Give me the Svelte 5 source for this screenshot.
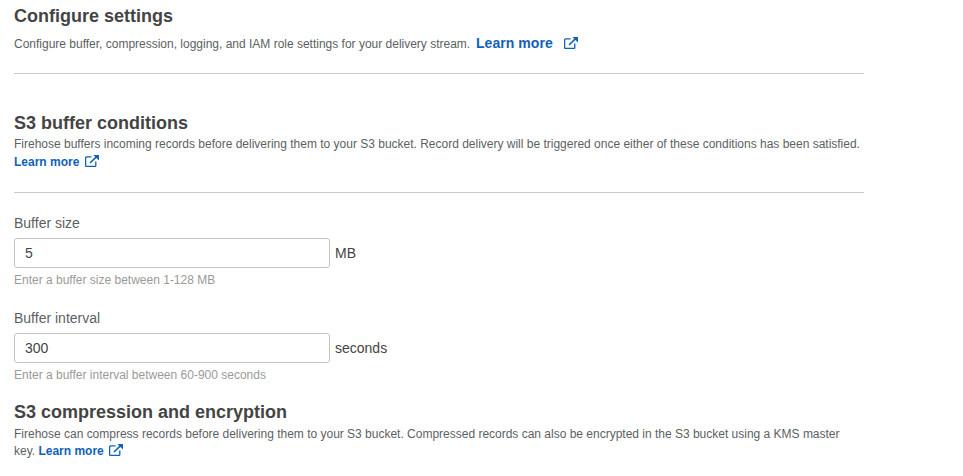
<script>
  const fields = [
    { label: 'Buffer size', value: '5', unit: 'MB', hint: 'Enter a buffer size between 1-128 MB' },
    { label: 'Buffer interval', value: '300', unit: 'seconds', hint: 'Enter a buffer interval between 60-900 seconds' }
  ]
</script>

{#snippet extIcon(cls)}
  <svg class={cls} viewBox="0 0 14 12" fill="none" stroke="currentColor" aria-hidden="true">
    <path d="M6.5 1.9H1.6a1 1 0 0 0-1 1v7.6a1 1 0 0 0 1 1h8.2a1 1 0 0 0 1-1V6.5" stroke-width="1.3" />
    <path d="M5 8L11.6 1.6" stroke-width="1.6" />
    <path d="M8.4 0H14V5.5z" fill="currentColor" stroke="none" />
  </svg>
{/snippet}

<main class="page">
  <section class="intro">
    <h2>Configure settings</h2>
    <p>Configure buffer, compression, logging, and IAM role settings for your delivery stream.
      <a class="big-link" href="#top">Learn more {@render extIcon('icon big')}</a></p>
  </section>

  <section class="buffer">
    <h3>S3 buffer conditions</h3>
    <p>Firehose buffers incoming records before delivering them to your S3 bucket. Record delivery will be triggered once either of these conditions has been satisfied.
      <a href="#top">Learn more {@render extIcon('icon')}</a></p>
  </section>

  <div class="fields">
    {#each fields as f}
      <div class="field">
        <label for={f.label}>{f.label}</label>
        <div class="row">
          <input id={f.label} type="text" value={f.value} />
          <span>{f.unit}</span>
        </div>
        <small>{f.hint}</small>
      </div>
    {/each}
  </div>

  <section class="compression">
    <h3>S3 compression and encryption</h3>
    <p>Firehose can compress records before delivering them to your S3 bucket. Compressed records can also be encrypted in the S3 bucket using a KMS master key.
      <a href="#top">Learn more {@render extIcon('icon')}</a></p>
  </section>
</main>

<style>
  :global(body) {
    background: #fff;
    overflow: hidden;
  }

  .page {
    width: 850px;
    height: 476px;
    padding-left: 14px;
    font-family: "Liberation Sans", Arial, sans-serif;
    color: #444;
    overflow: hidden;
  }

  h2, h3 {
    margin: 0;
    font-weight: 700;
    font-size: 18px;
    line-height: 22px;
    color: #444;
  }

  p {
    margin: 0;
    font-size: 12px;
    line-height: 18px;
    color: #5c5f63;
    letter-spacing: -0.006px;
  }

  a {
    color: #0f62b8;
    font-weight: 700;
    text-decoration: none;
    letter-spacing: 0;
  }

  .icon {
    width: 14px;
    height: 12px;
    margin-left: 2px;
    vertical-align: -1px;
  }

  .intro {
    padding-top: 5px;
    box-sizing: border-box;
    border-bottom: 1px solid #ccc;
    height: 74px;
  }

  .intro p {
    margin-top: 7px;
  }

  .big-link {
    font-size: 14px;
    margin-left: 2.5px;
    letter-spacing: 0.05px;
  }

  .icon.big {
    margin-left: 7px;
  }

  .buffer {
    margin-top: 38px;
    padding-bottom: 21px;
    border-bottom: 1px solid #ccc;
  }

  .buffer p {
    margin-top: 1px;
  }

  .fields {
    margin-top: 21px;
  }

  .field {
    margin-bottom: 20px;
  }

  label {
    display: block;
    font-size: 14px;
    line-height: 18px;
    color: #5c5f63;
    margin-bottom: 6px;
  }

  .row {
    display: flex;
    align-items: center;
    gap: 5px;
    font-size: 14px;
    color: #444;
  }

  input {
    width: 316px;
    height: 30px;
    box-sizing: border-box;
    padding: 0 10px;
    border: 1px solid #c4c4c4;
    border-radius: 3px;
    font: 14px "Liberation Sans", Arial, sans-serif;
    color: #444;
    outline: 0;
  }

  small {
    display: block;
    margin-top: 4px;
    font-size: 12px;
    line-height: 17px;
    color: #9a9a9a;
  }

  .compression {
    margin-top: -3px;
  }

  .compression p {
    margin-top: 3px;
    line-height: 17px;
    max-width: 840px;
  }
</style>
